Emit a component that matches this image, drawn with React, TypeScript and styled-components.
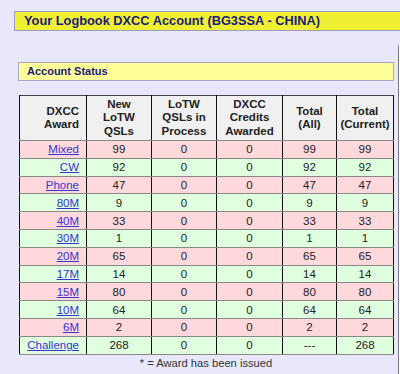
import React from "react";
import styled, { createGlobalStyle } from "styled-components";

const GlobalStyle = createGlobalStyle`
  html, body {
    margin: 0;
    padding: 0;
    background: #e8e8fa;
    overflow: hidden;
  }
  body {
    font-family: "Liberation Sans", Arial, sans-serif;
  }
`;

const Page = styled.div`
  width: 400px;
  height: 374px;
  padding-top: 11px;
  box-sizing: border-box;
  overflow: hidden;
`;

const TitleBar = styled.div`
  margin-left: 14px;
  width: 420px;
  height: 20px;
  box-sizing: border-box;
  background: #f0f032;
  border: 1px solid #9a9ac8;
  padding-left: 9px;
  font-size: 12.8px;
  font-weight: bold;
  line-height: 18px;
  color: #1c1c7a;
  white-space: nowrap;
`;

const Content = styled.div`
  display: flex;
  margin-top: 14px;
`;

const Main = styled.div`
  width: 376px;
  margin-left: 18px;
  padding-top: 17px;
`;

const SidePanel = styled.div`
  margin-left: 4px;
  width: 30px;
  height: 340px;
  border-left: 1px solid #7a7a7a;
  box-shadow: inset 1px 0 0 #ffffff;
`;

const SectionBar = styled.div`
  height: 19px;
  box-sizing: border-box;
  background: #ffff99;
  border: 1px solid #a8a8c8;
  padding-left: 8px;
  font-size: 11px;
  font-weight: bold;
  line-height: 17px;
  color: #1c1c7a;
`;

const Table = styled.table`
  margin: 14px 0 0 1px;
  width: 374px;
  border-collapse: collapse;
  table-layout: fixed;
  font-size: 11.5px;
  color: #222;
  border: 1px solid #444;
`;

const HeadCell = styled.th<{ $align?: string }>`
  background: #f0f0f0;
  font-weight: bold;
  text-align: ${(p) => p.$align || "center"};
  padding: 0 ${(p) => (p.$align === "right" ? "7px" : "0")} 0 0;
  height: 44px;
  line-height: 13.5px;
  border-left: 1px solid #111;
  border-right: 1px solid #111;
  border-bottom: 1px solid #888;
`;

const Row = styled.tr<{ $odd: boolean }>`
  background: ${(p) => (p.$odd ? "#ffd8dc" : "#dfffdf")};
`;

const Cell = styled.td<{ $align?: string }>`
  height: 16.8px;
  padding: 0 ${(p) => (p.$align === "right" ? "7px" : "0")} 0 0;
  text-align: ${(p) => p.$align || "center"};
  line-height: 14px;
  border-left: 1px solid #111;
  border-right: 1px solid #111;
  border-bottom: 1px solid #888;
`;

const AwardLink = styled.a`
  color: #3535d0;
  text-decoration: underline;
`;

const Note = styled.div`
  text-align: center;
  font-size: 11.2px;
  color: #333;
  margin-top: 2px;
`;

const rows: [string, string, string, string, string, string][] = [
  ["Mixed", "99", "0", "0", "99", "99"],
  ["CW", "92", "0", "0", "92", "92"],
  ["Phone", "47", "0", "0", "47", "47"],
  ["80M", "9", "0", "0", "9", "9"],
  ["40M", "33", "0", "0", "33", "33"],
  ["30M", "1", "0", "0", "1", "1"],
  ["20M", "65", "0", "0", "65", "65"],
  ["17M", "14", "0", "0", "14", "14"],
  ["15M", "80", "0", "0", "80", "80"],
  ["10M", "64", "0", "0", "64", "64"],
  ["6M", "2", "0", "0", "2", "2"],
  ["Challenge", "268", "0", "0", "---", "268"],
];

export default function App() {
  return (
    <Page>
      <GlobalStyle />
      <TitleBar>Your Logbook DXCC Account (BG3SSA - CHINA)</TitleBar>
      <Content>
        <Main>
          <SectionBar>Account Status</SectionBar>
          <Table>
            <colgroup>
              <col style={{ width: 67 }} />
              <col style={{ width: 65 }} />
              <col style={{ width: 65 }} />
              <col style={{ width: 66 }} />
              <col style={{ width: 54 }} />
              <col style={{ width: 57 }} />
            </colgroup>
            <thead>
              <tr>
                <HeadCell $align="right">
                  DXCC
                  <br />
                  Award
                </HeadCell>
                <HeadCell>
                  New
                  <br />
                  LoTW
                  <br />
                  QSLs
                </HeadCell>
                <HeadCell>
                  LoTW
                  <br />
                  QSLs in
                  <br />
                  Process
                </HeadCell>
                <HeadCell>
                  DXCC
                  <br />
                  Credits
                  <br />
                  Awarded
                </HeadCell>
                <HeadCell>
                  Total
                  <br />
                  (All)
                </HeadCell>
                <HeadCell>
                  Total
                  <br />
                  (Current)
                </HeadCell>
              </tr>
            </thead>
            <tbody>
              {rows.map((r, i) => (
                <Row key={r[0]} $odd={i % 2 === 0}>
                  <Cell $align="right">
                    <AwardLink href="#">{r[0]}</AwardLink>
                  </Cell>
                  {r.slice(1).map((v, j) => (
                    <Cell key={j}>{v}</Cell>
                  ))}
                </Row>
              ))}
            </tbody>
          </Table>
          <Note>* = Award has been issued</Note>
        </Main>
        <SidePanel />
      </Content>
    </Page>
  );
}
